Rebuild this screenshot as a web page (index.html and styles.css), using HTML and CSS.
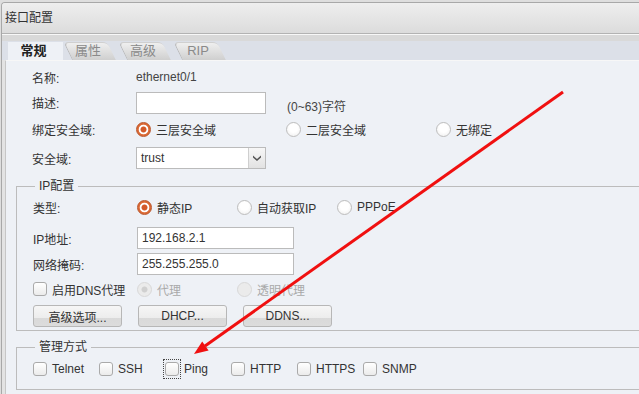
FILE: index.html
```html
<!DOCTYPE html>
<html lang="zh-CN">
<head>
  <meta charset="UTF-8" />
  <title>接口配置</title>
  <link rel="stylesheet" href="styles.css">
</head>
<body>
  <div class="window">
    <div class="titlebar">接口配置</div>
    <div class="tabbar">
      <div class="tab active">常规</div>
      <div class="tab">属性</div>
      <div class="tab">高级</div>
      <div class="tab">RIP</div>
    </div>
    <div class="panel">
      <div class="basic">
        <div class="row row-name">
          <span class="label">名称:</span>
          <span class="value">ethernet0/1</span>
        </div>
        <div class="row row-desc">
          <span class="label">描述:</span>
          <input class="text desc" type="text">
          <span class="hint">(0~63)字符</span>
        </div>
        <div class="row row-zone">
          <span class="label">绑定安全域:</span>
          <label class="opt w150"><span class="radio checked"></span>三层安全域</label>
          <label class="opt w150"><span class="radio"></span>二层安全域</label>
          <label class="opt"><span class="radio"></span>无绑定</label>
        </div>
        <div class="row row-sel">
          <span class="label">安全域:</span>
          <div class="select">
            <span class="sel-text">trust</span>
            <span class="sel-arrow">
              <svg width="8" height="6" viewBox="0 0 8 6"><path d="M0 0.5 L4 4 L8 0.5 L8 2.5 L4 6 L0 2.5 Z" fill="#555"/></svg>
            </span>
          </div>
        </div>
      </div>

      <fieldset class="group ip">
        <legend>IP配置</legend>
        <div class="inner">
          <div class="row row-type">
            <span class="label">类型:</span>
            <label class="opt w100"><span class="radio checked"></span>静态IP</label>
            <label class="opt w100"><span class="radio"></span>自动获取IP</label>
            <label class="opt"><span class="radio"></span>PPPoE</label>
          </div>
          <div class="row row-input">
            <span class="label">IP地址:</span>
            <input class="text ipbox" type="text" value="192.168.2.1">
          </div>
          <div class="row row-input2">
            <span class="label">网络掩码:</span>
            <input class="text ipbox" type="text" value="255.255.255.0">
          </div>
          <div class="row row-dns">
            <label class="opt w104"><span class="check"></span>启用DNS代理</label>
            <label class="opt w100 off"><span class="radio checked off"></span>代理</label>
            <label class="opt off"><span class="radio off"></span>透明代理</label>
          </div>
          <div class="row row-btns">
            <button class="btn">高级选项...</button>
            <button class="btn">DHCP...</button>
            <button class="btn">DDNS...</button>
          </div>
        </div>
      </fieldset>

      <fieldset class="group manage">
        <legend>管理方式</legend>
        <div class="inner">
          <div class="row row-checks">
            <label class="opt w66"><span class="check"></span>Telnet</label>
            <label class="opt w66"><span class="check"></span>SSH</label>
            <label class="opt w66"><span class="focus"><span class="check"></span></span>Ping</label>
            <label class="opt w66"><span class="check"></span>HTTP</label>
            <label class="opt w66"><span class="check"></span>HTTPS</label>
            <label class="opt w66"><span class="check"></span>SNMP</label>
          </div>
        </div>
      </fieldset>
    </div>
  </div>

  <!-- red annotation arrow drawn over the dialog -->
  <svg class="annot" width="639" height="394" viewBox="0 0 639 394">
    <line x1="563" y1="92" x2="205" y2="346" stroke="#f01010" stroke-width="3" />
    <polygon points="194,354 208.6,350.4 202.2,341.4" fill="#f01010" />
  </svg>
</body>
</html>
```

FILE: styles.css
```css
* {
  box-sizing: border-box;
}
body {
  margin: 0;
  width: 639px;
  height: 394px;
  overflow: hidden;
  position: relative;
  background: #dedede;
  font-family: "Liberation Sans", "Noto Sans CJK SC", sans-serif;
  font-size: 12px;
  color: #333;
}
.window {
  margin: 2px 0 0 1px;
  width: 638px;
  height: 392px;
  overflow: hidden;
  border-top: 1px solid #a8a8a8;
  border-left: 1px solid #a8a8a8;
  border-top-left-radius: 4px;
  background: #e3e3e3;
}
.titlebar {
  height: 31px;
  line-height: 30px;
  padding-left: 3px;
  background: linear-gradient(#eeeeee, #dcdcdc);
  border-bottom: 1px solid #b3b3b3;
}
.tabbar {
  height: 26px;
  border-top: 1px solid #f8f8f8;
  display: flex;
  align-items: flex-end;
  padding-left: 6px;
  background: linear-gradient(#d9d9d9 0, #d9d9d9 6px, #dce0e8 6px);
}
.tab {
  position: relative;
  z-index: 1;
  width: 55px;
  height: 18px;
  line-height: 18px;
  font-size: 13px;
  text-align: center;
  padding-right: 5px;
  color: #8a8a8a;
}
.tab::before {
  content: "";
  position: absolute;
  z-index: -1;
  top: 0;
  bottom: 0;
  left: 9px;
  right: 2px;
  transform-origin: bottom left;
  transform: skewX(26deg);
  border-radius: 5px 5px 0 0;
  border-left: 1px solid #b8b8b8;
  border-top: 1px solid #d0d0d0;
  background: linear-gradient(#efefef, #cfcfcf);
}
.tab.active {
  z-index: 2;
  padding-right: 4px;
  font-weight: bold;
  color: #222;
  background: #eef1f6;
}
.tab.active::before {
  display: none;
}
.panel {
  margin-left: 3px;
  height: 360px;
  border-left: 1px solid #c6c6c6;
  border-top: 1px solid #f7f7f7;
  background: #eef1f6;
  padding-top: 4px;
}
.basic {
  padding-left: 26px;
}
.row {
  display: flex;
  align-items: center;
  height: 24px;
}
.label {
  width: 104px;
  flex: none;
}
.value {
  color: #444;
}
.row-desc {
  height: 27px;
}
.row-zone {
  height: 26px;
}
.row-sel {
  margin-top: 4px;
}
.text {
  height: 22px;
  border: 1px solid #bbbbbb;
  background: #fff;
  font-family: inherit;
  font-size: 12px;
  color: #333;
  padding: 0 4px;
  margin: 0;
  outline: none;
}
.desc {
  width: 130px;
}
.hint {
  margin-left: 21px;
  padding-top: 5px;
  color: #444;
}
.ipbox {
  width: 157px;
}
.select {
  width: 130px;
  height: 22px;
  border: 1px solid #bbbbbb;
  background: #fff;
  display: flex;
}
.sel-text {
  flex: 1;
  line-height: 20px;
  padding-left: 4px;
}
.sel-arrow {
  width: 17px;
  border-left: 1px solid #cfcfcf;
  background: linear-gradient(#f7f7f7, #e2e2e2);
  display: flex;
  align-items: center;
  justify-content: center;
}
.opt {
  display: flex;
  align-items: center;
  flex: none;
}
.w150 { width: 150px; }
.w100 { width: 100px; }
.w104 { width: 104px; }
.w66 { width: 66px; }
.opt.off {
  color: #a9a9a9;
}
.radio {
  width: 15px;
  height: 15px;
  border-radius: 50%;
  border: 1px solid #bdbdbd;
  background: radial-gradient(circle at 50% 40%, #ffffff 40%, #ececec);
  margin-right: 5px;
  flex: none;
}
.radio.checked {
  border-color: #b9542a;
  background: radial-gradient(circle, #d35a2a 0, #d35a2a 2.6px, #ffffff 3.4px, #ffffff 4.4px, #dc6a35 5.2px);
}
.radio.off {
  border-color: #d8d8d8;
  background: #ebebeb;
}
.radio.checked.off {
  background: radial-gradient(circle, #d0d0d0 0, #d0d0d0 2.6px, #ebebeb 3.4px);
}
.check {
  width: 14px;
  height: 14px;
  border: 1px solid #aaaaaa;
  border-radius: 3px;
  background: linear-gradient(#ffffff, #ebebeb);
  margin-right: 5px;
  flex: none;
}
.focus {
  display: flex;
  border: 1px dotted #444;
  padding: 2px 1px;
  margin: -3px 3px -3px -2px;
}
.focus .check {
  margin-right: 0;
}
.group {
  margin: 8px -4px 0 10px;
  padding: 0;
  border: 1px solid #bcbcbc;
  min-width: 0;
}
.group legend {
  margin-left: 18px;
  padding: 0 4px;
  line-height: 16px;
  font-size: 12px;
  color: #333;
}
.inner {
  padding: 1px 0 2px 16px;
}
.row-input {
  margin-top: 6px;
  height: 26px;
}
.row-input2 {
  height: 26px;
}
.row-btns {
  margin-top: 3px;
}
.btn {
  width: 89px;
  height: 22px;
  margin: 0 16px 0 0;
  padding: 0;
  border: 1px solid #b7b7b7;
  border-radius: 3px;
  background: linear-gradient(#f6f6f6 0, #ededed 58%, #d9d9d9 58%, #dcdcdc 100%);
  font-family: inherit;
  font-size: 12px;
  color: #333;
}
.manage .inner {
  padding-top: 2px;
  padding-bottom: 8px;
}
.annot {
  position: absolute;
  top: 0;
  left: 0;
  pointer-events: none;
}
```
